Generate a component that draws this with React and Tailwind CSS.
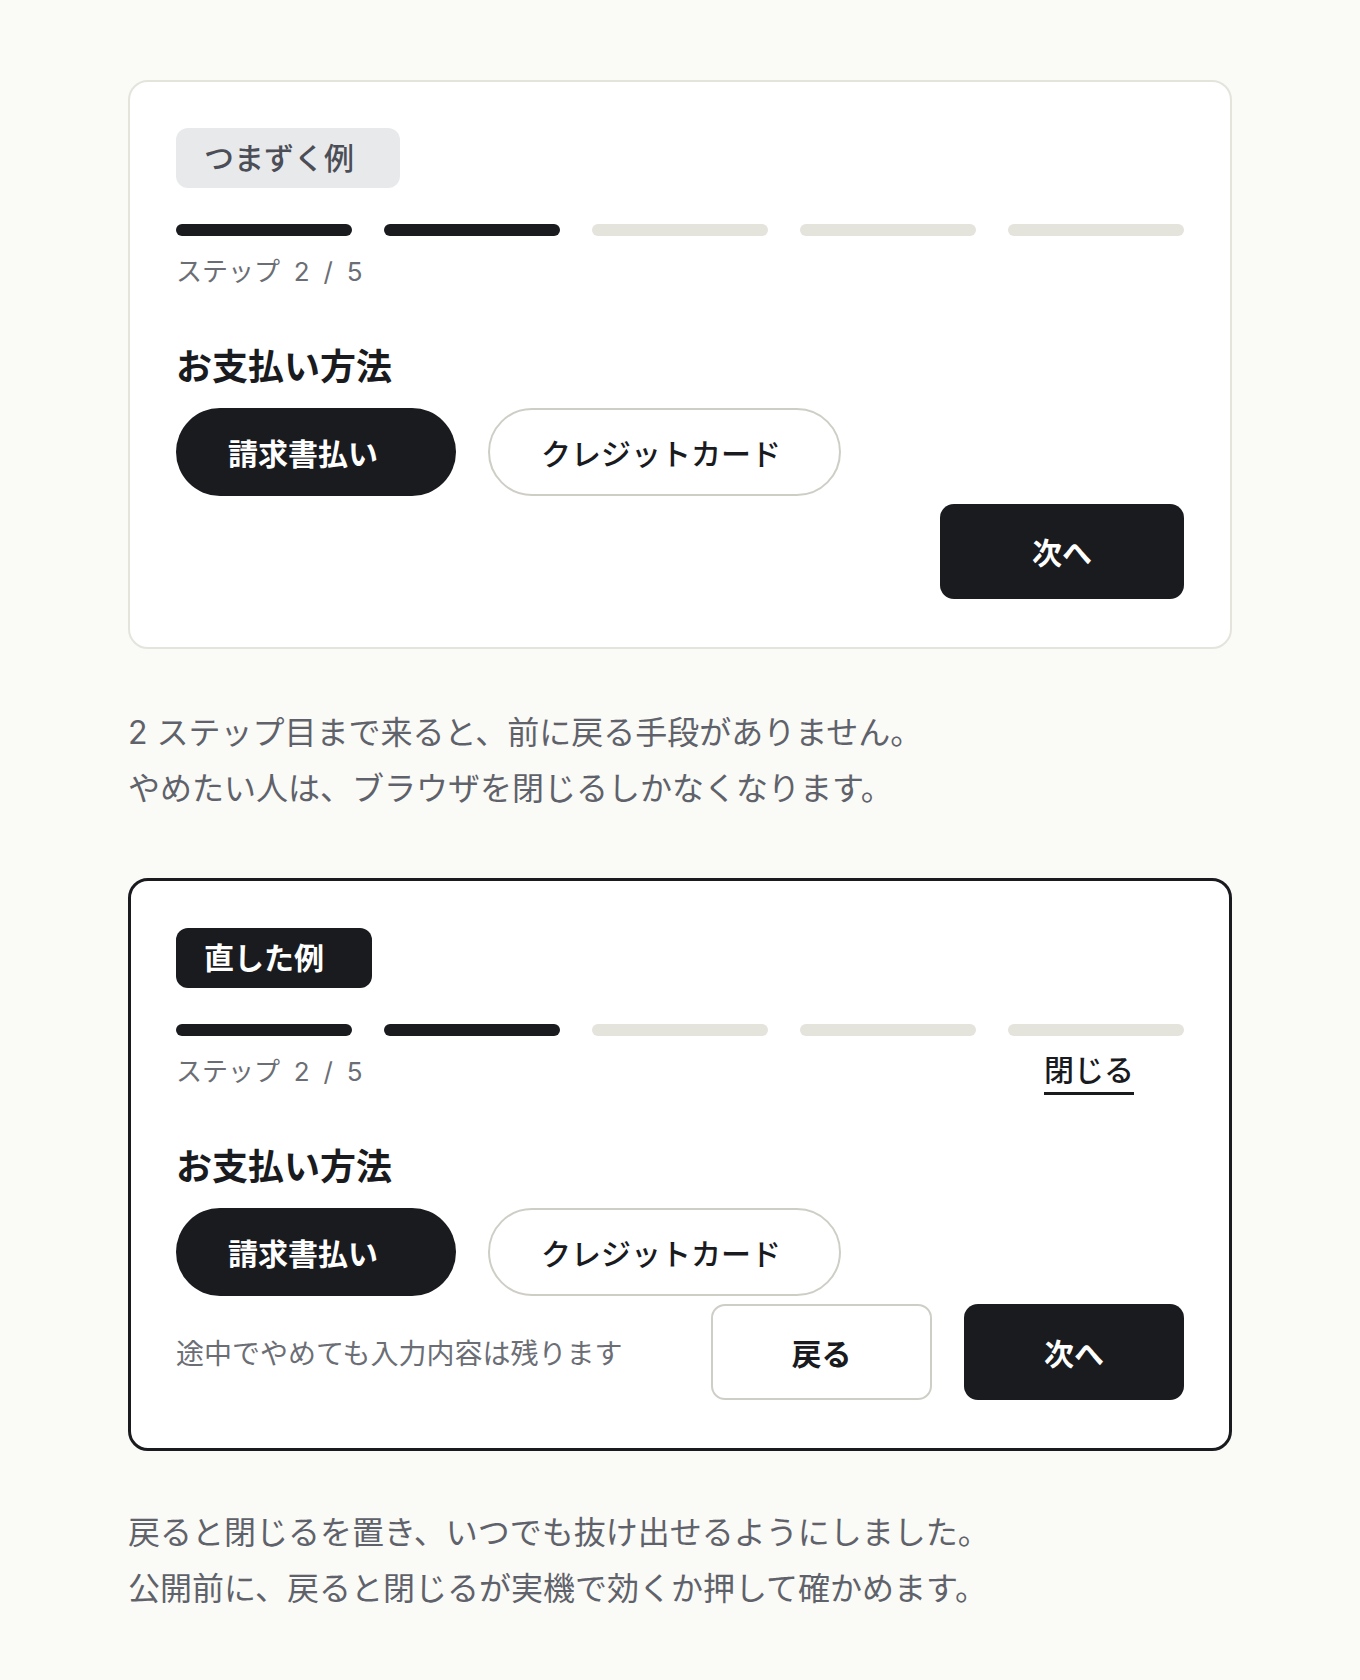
const font = { fontFamily: '"Noto Sans CJK JP", "Noto Sans", sans-serif' };
const latin = { fontFamily: 'Inter, "Noto Sans CJK JP", sans-serif' };

const ProgressBars = () => (
  <div className="mt-[36px] grid grid-cols-5 gap-8">
    {[0, 1, 2, 3, 4].map((i) => (
      <div
        key={i}
        className={`h-3 rounded-full ${i < 2 ? 'bg-[#1a1b1f]' : 'bg-[#e4e3dc]'}`}
      />
    ))}
  </div>
);

const StepLabel = () => (
  <span className="text-[26px] leading-[36px] text-[#6b6e75]">
    ステップ<span className="leading-none [word-spacing:0.25em]" style={latin}> 2 / 5</span>
  </span>
);

const Pills = () => (
  <div className="mt-[22px] flex gap-8">
    <button className="flex h-[88px] w-[280px] items-center rounded-full bg-[#1a1b1f] pl-[52px] text-[30px] font-bold text-white">
      請求書払い
    </button>
    <button className="flex h-[88px] w-[353px] items-center rounded-full border-2 border-[#cfcec6] bg-white pl-[51px] text-[30px] font-medium text-[#1a1b1f]">
      クレジットカード
    </button>
  </div>
);

const Heading = () => (
  <h2 className="mt-[54px] text-[36px] font-bold leading-[44px] text-[#1a1b1f]">お支払い方法</h2>
);

const App = () => {
  return (
    <div className="min-h-[1680px] bg-[#fafaf6]" style={font}>
      <div className="mx-auto w-[1104px] pt-[80px] pb-[64px]">
        {/* つまずく例 */}
        <div className="rounded-[20px] border-2 border-[#e4e3dc] bg-white px-[46px] pt-[46px] pb-[48px]">
          <div className="flex h-[60px] w-[224px] items-center rounded-[12px] bg-[#e8e9eb] pb-[3px] pl-[28px] text-[30px] font-medium text-[#4b4e56]">
            つまずく例
          </div>
          <ProgressBars />
          <div className="mt-4 h-[36px]">
            <StepLabel />
          </div>
          <Heading />
          <Pills />
          <div className="mt-2 flex justify-end">
            <button className="h-[95px] w-[244px] rounded-[14px] bg-[#1a1b1f] text-[30px] font-bold text-white">
              次へ
            </button>
          </div>
        </div>

        <div className="mt-[53px] text-[32px] leading-[56px] text-[#5f626a]">
          <p>
            <span className="leading-none" style={latin}>2 </span>ステップ目まで来ると、前に戻る手段がありません。
          </p>
          <p>やめたい人は、ブラウザを閉じるしかなくなります。</p>
        </div>

        {/* 直した例 */}
        <div className="mt-[64px] rounded-[20px] border-[3px] border-[#1a1b1f] bg-white px-[45px] pt-[47px] pb-[48px]">
          <div className="flex h-[60px] w-[196px] items-center rounded-[12px] bg-[#1a1b1f] pb-[3px] pl-[28px] text-[30px] font-bold text-white">
            直した例
          </div>
          <ProgressBars />
          <div className="mt-4 flex h-[36px] items-start justify-between">
            <StepLabel />
            <button className="-mt-[2px] mr-[50px] border-b-[3px] border-[#1a1b1f] pb-[6px] text-[30px] font-medium leading-[36px] text-[#1a1b1f]">
              閉じる
            </button>
          </div>
          <Heading />
          <Pills />
          <div className="mt-2 flex items-center gap-8">
            <p className="flex-1 text-[28px] text-[#6b6e75]">途中でやめても入力内容は残ります</p>
            <button className="h-[96px] w-[221px] rounded-[14px] border-2 border-[#cfcec6] bg-white text-[30px] font-bold text-[#1a1b1f]">
              戻る
            </button>
            <button className="h-[96px] w-[220px] rounded-[14px] bg-[#1a1b1f] text-[30px] font-bold text-white">
              次へ
            </button>
          </div>
        </div>

        <div className="mt-[51px] text-[32px] leading-[56px] text-[#5f626a]">
          <p>戻ると閉じるを置き、いつでも抜け出せるようにしました。</p>
          <p>公開前に、戻ると閉じるが実機で効くか押して確かめます。</p>
        </div>
      </div>
    </div>
  );
};

export default App;
